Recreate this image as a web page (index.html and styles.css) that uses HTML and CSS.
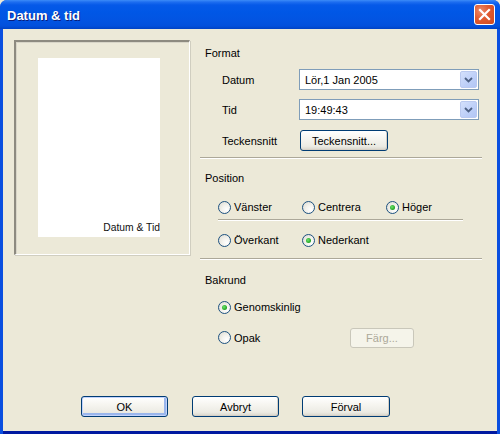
FILE: index.html
```html
<!DOCTYPE html>
<html>
<head>
<meta charset="utf-8">
<link rel="stylesheet" href="styles.css">
</head>
<body>
<div class="window">
  <div class="titlebar">
    <span class="title">Datum &amp; tid</span>
    <div class="close">
      <svg width="13" height="13" viewBox="0 0 13 13"><path d="M2 2 L11 11 M11 2 L2 11" stroke="#fff" stroke-width="2.2" stroke-linecap="square"/></svg>
    </div>
  </div>
  <div class="body">
    <div class="main">
      <div class="preview">
        <div class="page"><span class="page-text">Datum &amp; Tid</span></div>
      </div>
      <div class="settings">
        <div class="label head l-format">Format</div>
        <div class="row r-datum">
          <span class="field-label">Datum</span>
          <div class="combo"><span class="combo-text">Lör,1 Jan 2005</span><span class="combo-btn"><svg width="9" height="6" viewBox="0 0 9 6"><path d="M1 1 L4.5 4.5 L8 1" fill="none" stroke="#4D6185" stroke-width="1.8"/></svg></span></div>
        </div>
        <div class="row r-tid">
          <span class="field-label">Tid</span>
          <div class="combo"><span class="combo-text">19:49:43</span><span class="combo-btn"><svg width="9" height="6" viewBox="0 0 9 6"><path d="M1 1 L4.5 4.5 L8 1" fill="none" stroke="#4D6185" stroke-width="1.8"/></svg></span></div>
        </div>
        <div class="row r-font">
          <span class="field-label">Teckensnitt</span>
          <button class="btn btn-font">Teckensnitt...</button>
        </div>
        <div class="sep s-1"></div>
        <div class="label head l-pos">Position</div>
        <div class="radio-row rr-1">
          <span class="radio"><span class="circle"></span>Vänster</span>
          <span class="radio r-center"><span class="circle"></span>Centrera</span>
          <span class="radio r-right"><span class="circle on"></span>Höger</span>
        </div>
        <div class="subsep"></div>
        <div class="radio-row rr-2">
          <span class="radio"><span class="circle"></span>Överkant</span>
          <span class="radio r-center"><span class="circle on"></span>Nederkant</span>
        </div>
        <div class="sep s-2"></div>
        <div class="label head l-bg">Bakrund</div>
        <div class="radio-row rr-3">
          <span class="radio"><span class="circle on"></span>Genomskinlig</span>
        </div>
        <div class="radio-row rr-4">
          <span class="radio"><span class="circle"></span>Opak</span>
          <button class="btn btn-color" disabled>Färg...</button>
        </div>
      </div>
    </div>
    <div class="footer">
      <button class="btn btn-main btn-default">OK</button>
      <button class="btn btn-main">Avbryt</button>
      <button class="btn btn-main btn-last">Förval</button>
    </div>
  </div>
</div>
</body>
</html>
```
FILE: styles.css
```css
* { box-sizing: border-box; }
html, body { margin: 0; padding: 0; }
body {
  width: 500px;
  height: 434px;
  overflow: hidden;
  font-family: "Liberation Sans", Arial, sans-serif;
  font-size: 11px;
  color: #000;
  background: #ECE9D8;
}
.window {
  width: 500px;
  height: 434px;
  display: flex;
  flex-direction: column;
  background: #0A4FE0;
  border-radius: 7px 7px 0 0;
  overflow: hidden;
}
.titlebar {
  height: 29px;
  flex: none;
  display: flex;
  align-items: center;
  justify-content: space-between;
  padding: 0 5px 0 7px;
  background: linear-gradient(to bottom, #3C8CF8 0px, #1E6EF0 2px, #0559E8 5px, #0057E6 12px, #0254E2 20px, #0250DC 26px, #0042C4 29px);
}
.title {
  color: #fff;
  font-weight: bold;
  font-size: 13px;
  text-shadow: 1px 1px 0 #0A1E7A;
  letter-spacing: 0;
  margin-top: 1px;
}
.close {
  width: 21px;
  height: 21px;
  margin-right: 0;
  border: 1px solid #fff;
  border-radius: 3px;
  background: radial-gradient(circle at 30% 30%, #EB8A6A 0%, #E05A30 45%, #CF4A1E 100%);
  display: flex;
  align-items: center;
  justify-content: center;
}
.body {
  flex: 1;
  margin: 0 3px 3px 3px;
  background: #ECE9D8;
  display: flex;
  flex-direction: column;
  box-shadow: 0 3px 0 #0019A0;
}
.main {
  display: flex;
  padding-top: 11px;
}
.preview {
  margin-left: 11px;
  width: 176px;
  height: 215px;
  border-top: 2px solid #8D8A80;
  border-left: 2px solid #8D8A80;
  border-right: 1px solid #fff;
  border-bottom: 1px solid #fff;
  box-shadow: inset 1px 1px 0 #D8D5C8, 1px 1px 0 #D0CEC0;
  padding: 16px 0 0 22px;
}
.page {
  width: 122px;
  height: 179px;
  background: #fff;
  display: flex;
  align-items: flex-end;
  justify-content: flex-end;
  padding-bottom: 3px;
}
.page-text {
  font-size: 10.3px;
  color: #111;
  line-height: 12px;
}
.settings {
  margin-left: 10px;
  width: 282px;
  display: flex;
  flex-direction: column;
}
.label { line-height: 14px; height: 14px; }
.head { padding-left: 5px; }
.l-format { margin-top: 6px; }
.row {
  display: flex;
  align-items: center;
  height: 21px;
}
.r-datum { margin-top: 9px; }
.r-tid { margin-top: 9px; }
.r-font { margin-top: 10px; }
.field-label {
  width: 99px;
  padding-left: 22px;
  flex: none;
}
.combo {
  width: 180px;
  height: 21px;
  border: 1px solid #7F9DB9;
  background: #fff;
  display: flex;
  align-items: center;
  justify-content: space-between;
  padding: 1px;
}
.combo-text { padding-left: 4px; }
.combo-btn {
  width: 17px;
  height: 17px;
  border: 1px solid #BAC9F0;
  border-radius: 2px;
  background: linear-gradient(135deg, #D4E0FC 0%, #BDCFF8 60%, #B2C6F5 100%);
  display: flex;
  align-items: center;
  justify-content: center;
}
.btn {
  font-family: "Liberation Sans", Arial, sans-serif;
  font-size: 11px;
  color: #000;
  height: 21px;
  padding: 0;
  border: 1px solid #003C74;
  border-radius: 3px;
  background: linear-gradient(to bottom, #FFFFFF 0%, #F6F5F0 40%, #ECEBE4 80%, #D8D5CA 100%);
  box-shadow: inset -1px -1px 0 #D6D0C5;
}
.btn-font { width: 88px; margin-left: 1px; }
.sep {
  height: 2px;
  border-top: 1px solid #ACA899;
  border-bottom: 1px solid #fff;
  width: 282px;
}
.s-1 { margin-top: 6px; }
.l-pos { margin-top: 12px; }
.radio-row {
  display: flex;
  align-items: center;
  height: 16px;
  padding-left: 18px;
}
.rr-1 { margin-top: 14px; }
.subsep {
  margin-top: 4px;
  margin-left: 18px;
  width: 245px;
  height: 2px;
  border-top: 1px solid #ACA899;
  border-bottom: 1px solid #fff;
}
.rr-2 { margin-top: 11px; }
.s-2 { margin-top: 10px; }
.l-bg { margin-top: 13px; }
.rr-3 { margin-top: 12px; }
.rr-4 { margin-top: 12px; height: 21px; }
.radio {
  display: flex;
  align-items: center;
  width: 84px;
  flex: none;
}
.r-right { width: auto; }
.circle {
  width: 13px;
  height: 13px;
  border: 1px solid #1C5180;
  border-radius: 50%;
  background: radial-gradient(circle at 70% 70%, #FFFFFF 0%, #F4F3EE 40%, #DCDAD0 100%);
  margin-right: 3px;
  flex: none;
  position: relative;
}
.circle.on::after {
  content: "";
  position: absolute;
  left: 3px;
  top: 3px;
  width: 5px;
  height: 5px;
  border-radius: 50%;
  background: radial-gradient(circle at 40% 40%, #6CE46C 0%, #21A121 70%);
}
.btn-color {
  margin-left: 48px;
  width: 64px;
  height: 20px;
  color: #ACA899;
  border-color: #C9C7BA;
  background: #F5F4EA;
  box-shadow: none;
}
.footer {
  display: flex;
  margin-top: auto;
  margin-bottom: 14px;
  padding-left: 78px;
}
.btn-main { width: 87px; height: 21px; margin-right: 24px; }
.btn-main:nth-child(2) { margin-right: 23px; }
.btn-last { width: 88px; }
.btn-default {
  box-shadow: inset 0 0 0 1px #C2D3FC, inset -1px -1px 0 2px #9AB6EC;
}
```
